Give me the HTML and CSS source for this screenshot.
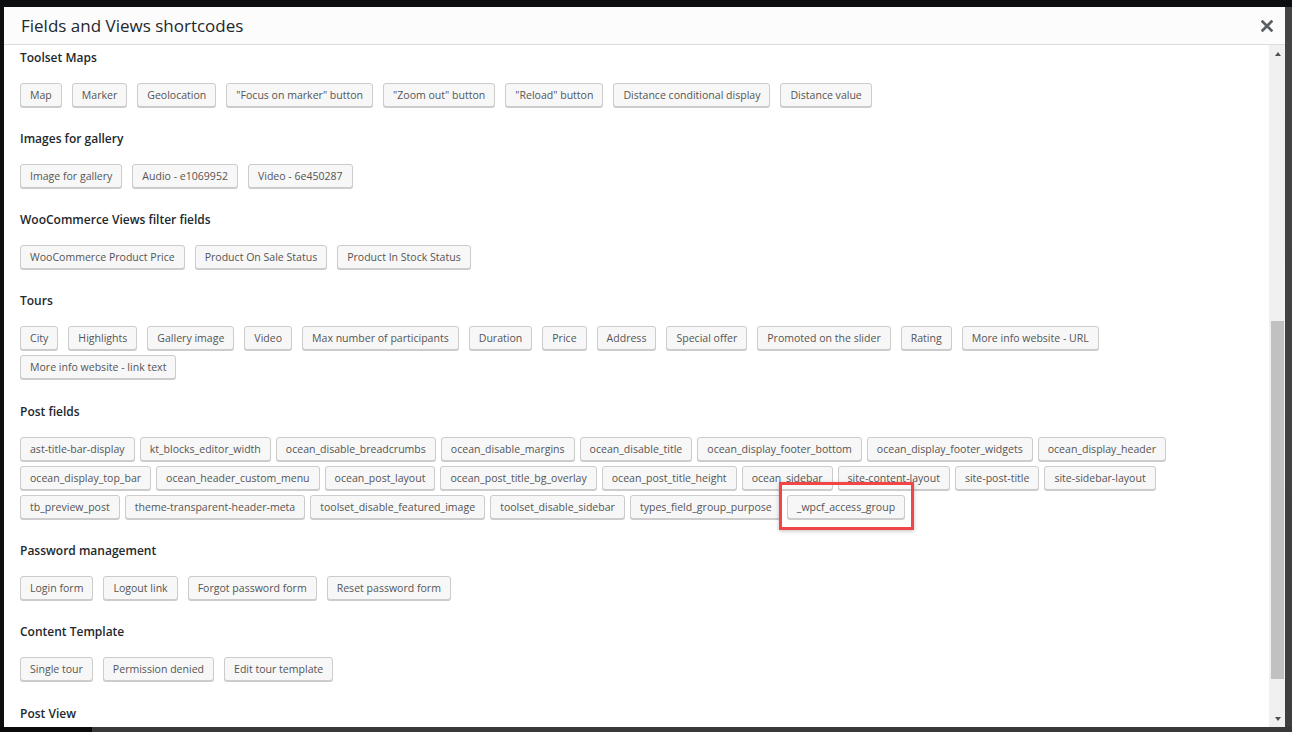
FILE: index.html
```html
<!DOCTYPE html>
<html lang="en">
<head>
<meta charset="utf-8">
<title>Fields and Views shortcodes</title>
<link rel="stylesheet" href="styles.css">
</head>
<body>
<div class="dialog">
  <div class="dialog-header">
    <h1 class="dialog-title">Fields and Views shortcodes</h1>
    <button class="close" aria-label="Close">
      <svg width="12" height="12" viewBox="0 0 12 12"><path d="M1.6 1.6 L10.4 10.4 M10.4 1.6 L1.6 10.4" stroke="#5b5e63" stroke-width="2.7" stroke-linecap="square" fill="none"/></svg>
    </button>
  </div>
  <div class="dialog-body">
    <div class="content">
      <section class="group">
        <h2 class="group-title">Toolset Maps</h2>
        <div class="rows">
          <div class="row">
            <button class="btn">Map</button>
            <button class="btn">Marker</button>
            <button class="btn">Geolocation</button>
            <button class="btn">"Focus on marker" button</button>
            <button class="btn">"Zoom out" button</button>
            <button class="btn">"Reload" button</button>
            <button class="btn">Distance conditional display</button>
            <button class="btn">Distance value</button>
          </div>
        </div>
      </section>
      <section class="group">
        <h2 class="group-title">Images for gallery</h2>
        <div class="rows">
          <div class="row">
            <button class="btn">Image for gallery</button>
            <button class="btn">Audio - e1069952</button>
            <button class="btn">Video - 6e450287</button>
          </div>
        </div>
      </section>
      <section class="group">
        <h2 class="group-title">WooCommerce Views filter fields</h2>
        <div class="rows">
          <div class="row">
            <button class="btn">WooCommerce Product Price</button>
            <button class="btn">Product On Sale Status</button>
            <button class="btn">Product In Stock Status</button>
          </div>
        </div>
      </section>
      <section class="group">
        <h2 class="group-title">Tours</h2>
        <div class="rows">
          <div class="row">
            <button class="btn">City</button>
            <button class="btn">Highlights</button>
            <button class="btn">Gallery image</button>
            <button class="btn">Video</button>
            <button class="btn">Max number of participants</button>
            <button class="btn">Duration</button>
            <button class="btn">Price</button>
            <button class="btn">Address</button>
            <button class="btn">Special offer</button>
            <button class="btn">Promoted on the slider</button>
            <button class="btn">Rating</button>
            <button class="btn">More info website - URL</button>
          </div>
          <div class="row">
            <button class="btn">More info website - link text</button>
          </div>
        </div>
      </section>
      <section class="group">
        <h2 class="group-title">Post fields</h2>
        <div class="rows">
          <div class="row row-tight">
            <button class="btn">ast-title-bar-display</button>
            <button class="btn">kt_blocks_editor_width</button>
            <button class="btn">ocean_disable_breadcrumbs</button>
            <button class="btn">ocean_disable_margins</button>
            <button class="btn">ocean_disable_title</button>
            <button class="btn">ocean_display_footer_bottom</button>
            <button class="btn">ocean_display_footer_widgets</button>
            <button class="btn">ocean_display_header</button>
          </div>
          <div class="row row-tight">
            <button class="btn">ocean_display_top_bar</button>
            <button class="btn">ocean_header_custom_menu</button>
            <button class="btn">ocean_post_layout</button>
            <button class="btn">ocean_post_title_bg_overlay</button>
            <button class="btn">ocean_post_title_height</button>
            <button class="btn">ocean_sidebar</button>
            <button class="btn">site-content-layout</button>
            <button class="btn">site-post-title</button>
            <button class="btn">site-sidebar-layout</button>
          </div>
          <div class="row row-tight">
            <button class="btn">tb_preview_post</button>
            <button class="btn">theme-transparent-header-meta</button>
            <button class="btn">toolset_disable_featured_image</button>
            <button class="btn">toolset_disable_sidebar</button>
            <button class="btn">types_field_group_purpose</button>
            <span class="annotated"><button class="btn">_wpcf_access_group</button></span>
          </div>
        </div>
      </section>
      <section class="group">
        <h2 class="group-title">Password management</h2>
        <div class="rows">
          <div class="row">
            <button class="btn">Login form</button>
            <button class="btn">Logout link</button>
            <button class="btn">Forgot password form</button>
            <button class="btn">Reset password form</button>
          </div>
        </div>
      </section>
      <section class="group">
        <h2 class="group-title">Content Template</h2>
        <div class="rows">
          <div class="row">
            <button class="btn">Single tour</button>
            <button class="btn">Permission denied</button>
            <button class="btn">Edit tour template</button>
          </div>
        </div>
      </section>
      <section class="group">
        <h2 class="group-title">Post View</h2>
      </section>
    </div>
    <div class="scrollbar">
      <div class="sb-arrow sb-up"></div>
      <div class="sb-track">
        <div class="sb-thumb"></div>
      </div>
      <div class="sb-arrow sb-down"></div>
    </div>
  </div>
</div>
</body>
</html>
```
FILE: styles.css
```css
html, body {
  margin: 0;
  height: 100%;
}

body {
  width: 1292px;
  height: 732px;
  overflow: hidden;
  box-sizing: border-box;
  padding: 7px 0 0 4px;
  font-family: "Open Sans", "Noto Sans", sans-serif;
  background:
    linear-gradient(to right, #0b0b0c 0, #0b0b0c 92px, #383838 92px, #383838 100%) left bottom / 100% 5px no-repeat,
    linear-gradient(#0c0e10 0, #0c0e10 7px, #444 7px, #3e3e3e 100%) right top / 7px 100% no-repeat,
    #0c0e10;
}

.dialog {
  width: 1281px;
  height: 720px;
  background: #fff;
  display: flex;
  flex-direction: column;
  overflow: hidden;
}

.dialog-header {
  height: 37px;
  flex: 0 0 auto;
  background: #fcfcfc;
  border-bottom: 1px solid #dcdcdc;
  display: flex;
  align-items: center;
  justify-content: space-between;
  padding: 0 12px 0 17px;
}

.dialog-title {
  margin: 0;
  padding-top: 1px;
  font-size: 17px;
  font-weight: 400;
  line-height: 36px;
  color: #23282d;
}

.close {
  border: 0;
  background: none;
  padding: 0;
  width: 12px;
  height: 12px;
  margin-top: 1px;
  display: flex;
}

.dialog-body {
  flex: 1 1 auto;
  display: flex;
  min-height: 0;
}

.content {
  flex: 1 1 auto;
  overflow: hidden;
  padding: 3.5px 0 0 16px;
}

.group {
  margin-bottom: 23.3px;
}

.group-title {
  margin: 0 0 16px;
  font-size: 12px;
  line-height: 18px;
  font-weight: 600;
  color: #23282d;
}

.rows {
  display: flex;
  flex-direction: column;
  gap: 5px;
}

.row {
  display: flex;
  gap: 10px;
}

.row-tight {
  gap: 5px;
}

.btn {
  font-family: "Open Sans", "Noto Sans", sans-serif;
  font-size: 10.55px;
  line-height: 22px;
  height: 24px;
  padding: 0 9px;
  color: #555;
  background: #f7f7f7;
  border: 1px solid #cccccc;
  border-radius: 3px;
  box-shadow: 0 1px 0 #cccccc;
  white-space: nowrap;
  flex: 0 0 auto;
  box-sizing: border-box;
}

.annotated {
  position: relative;
  display: flex;
}

.annotated::after {
  content: "";
  position: absolute;
  left: -8px;
  right: -9px;
  top: -13px;
  bottom: -11px;
  border: 3px solid #f24545;
  box-shadow: 0 1px 4px rgba(0, 0, 0, 0.25);
  pointer-events: none;
}

.scrollbar {
  flex: 0 0 16px;
  width: 16px;
  background: #f0f0f0;
  display: flex;
  flex-direction: column;
}

.sb-arrow {
  height: 17px;
  flex: 0 0 17px;
  display: flex;
  align-items: center;
  justify-content: center;
}

.sb-up::before {
  content: "";
  border-left: 3.5px solid transparent;
  border-right: 3.5px solid transparent;
  border-bottom: 4px solid #505050;
  margin-left: 1px;
}

.sb-down::before {
  content: "";
  border-left: 3.5px solid transparent;
  border-right: 3.5px solid transparent;
  border-top: 4px solid #505050;
  margin-left: 1px;
}

.sb-track {
  flex: 1 1 auto;
  padding-top: 259px;
}

.sb-thumb {
  width: 13px;
  height: 358px;
  margin-left: 2px;
  background: #c1c1c1;
}
```
